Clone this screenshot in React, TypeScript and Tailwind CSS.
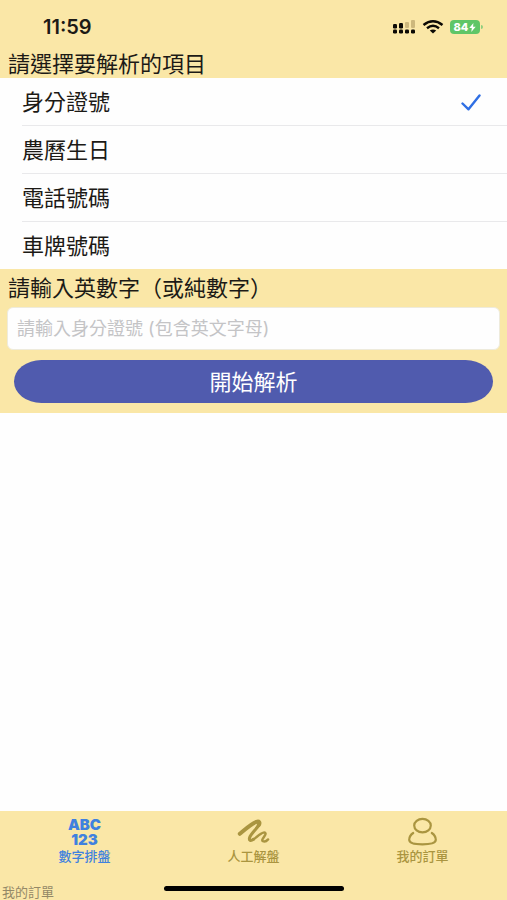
import { useState } from "react";
import type { ReactNode } from "react";

const options = [
  { label: "身分證號", hint: "請輸入身分證號 (包含英文字母)" },
  { label: "農曆生日", hint: "請輸入農曆生日" },
  { label: "電話號碼", hint: "請輸入電話號碼" },
  { label: "車牌號碼", hint: "請輸入車牌號碼" },
];

function SignalIcon() {
  return (
    <svg width="24" height="16" viewBox="0 0 24 16" aria-hidden="true">
      <g fill="#cdb87c">
        <rect x="13" y="3" width="4" height="6" rx="1" />
        <rect x="19" y="1" width="4" height="8" rx="1" />
      </g>
      <g fill="#0c0a05">
        <rect x="1" y="5" width="4" height="4.4" rx="1.2" />
        <rect x="7" y="4" width="4" height="5.4" rx="1.2" />
        <rect x="1" y="10.6" width="4" height="3.8" rx="1.2" />
        <rect x="7" y="10.6" width="4" height="3.8" rx="1.2" />
        <rect x="13" y="10.6" width="4" height="3.8" rx="1.2" />
        <rect x="19" y="10.6" width="4" height="3.8" rx="1.2" />
      </g>
    </svg>
  );
}

function WifiIcon() {
  return (
    <svg width="22" height="14" viewBox="0 0 22 14" fill="none" stroke="#0c0a05" aria-hidden="true">
      <path d="M1.5 5Q11-2.4 20.5 5" strokeWidth="2.5" />
      <path d="M5 8.2Q11 3.4 17 8.2" strokeWidth="2.4" />
      <path d="M7.8 10.6Q11 8.2 14.2 10.6L11 13.4Z" fill="#0c0a05" stroke="none" />
    </svg>
  );
}

function Battery() {
  return (
    <div className="flex items-center gap-px">
      <div className="flex h-[14px] w-[30px] items-center justify-center gap-px rounded-[4px] bg-[#5fc667] text-[11px] leading-none font-extrabold text-white">
        84
        <svg width="7" height="9" viewBox="0 0 7 9" fill="currentColor" aria-hidden="true">
          <path d="M4.4 0 .3 5.1h2.5L2.3 9l4.4-5.3H4.1Z" />
        </svg>
      </div>
      <div className="h-1 w-[2px] rounded-r-full bg-[#8fce7e]" />
    </div>
  );
}

function CheckIcon() {
  return (
    <svg width="20" height="17" viewBox="0 0 20 17" fill="none" stroke="#2f6fe4" strokeWidth="2.4" strokeLinecap="round" strokeLinejoin="round" aria-hidden="true">
      <path d="m1.5 9.5 6 5.8L18.5 1.5" />
    </svg>
  );
}

function ScribbleIcon() {
  return (
    <svg width="34" height="28" viewBox="0 0 34 28" fill="none" stroke="currentColor" strokeLinecap="round" strokeLinejoin="round" aria-hidden="true">
      <path d="M2.8 15.8C8 11.5 14.5 5.6 19.4 3.9c2.8-.9 3.9.6 2.4 3.2" strokeWidth="4" />
      <path d="M21.8 7.1c-2.2 3.8-8.2 9.1-9.2 12.5-.8 2.9 1 3.7 3.9 1.7" strokeWidth="3.1" />
      <path d="M16.5 21.3c3.4-2.3 7-6.1 10-6.7 2.4-.5 2.6 1.2 1.2 3.2-1.8 2.6-3.4 4.6-1.8 5.4 1.8.8 3.8-.2 5.2-1.8" strokeWidth="2.4" />
    </svg>
  );
}

function PersonIcon() {
  return (
    <svg width="32" height="30" viewBox="0 0 32 30" fill="none" stroke="currentColor" strokeWidth="2.2" strokeLinecap="round" aria-hidden="true">
      <ellipse cx="15.5" cy="8.6" rx="8.3" ry="6.7" />
      <path d="M6.2 16C3.4 17.9 2.2 20.6 2.2 22.8c0 3.2 5.3 4.6 13.3 4.6s13.3-1.4 13.3-4.6c0-2.2-1.2-4.9-4-6.8" />
    </svg>
  );
}

function Tab({ label, active, onSelect, children }: { label: string; active: boolean; onSelect: () => void; children: ReactNode }) {
  return (
    <button
      type="button"
      aria-current={active ? "page" : undefined}
      onClick={onSelect}
      className={`flex flex-1 flex-col items-center text-[13px] leading-4 font-medium ${active ? "text-[#4081df]" : "text-[#aa9540]"}`}
    >
      <span className="flex h-8 items-center justify-center">{children}</span>
      {label}
    </button>
  );
}

export default function App() {
  const [selected, setSelected] = useState(0);
  const [tab, setTab] = useState(0);

  return (
    <div className="flex min-h-screen flex-col bg-[#fefefe] font-[Inter,'Noto_Sans_CJK_TC',sans-serif] text-[#1c1a16]">
      <header className="bg-[#fae7a7]">
        <div className="flex h-[52px] items-center justify-between pt-[2px] pr-6 pl-[43px]">
          <time className="text-[20px] leading-6 font-semibold">11:59</time>
          <div className="flex items-center gap-[6px]">
            <SignalIcon />
            <WifiIcon />
            <Battery />
          </div>
        </div>
        <h1 id="options-title" className="px-2 pb-[2px] text-[22px] leading-6 font-normal">
          請選擇要解析的項目
        </h1>
      </header>

      <main className="flex-1">
        <div role="radiogroup" aria-labelledby="options-title" className="pl-[22px]">
          {options.map((option, index) => (
            <label
              key={option.label}
              className="flex h-12 cursor-pointer items-center justify-between border-b border-[#e9e9eb] pt-px pr-[26px] text-[22px] last:h-[47px] last:border-b-0"
            >
              {option.label}
              <input
                type="radio"
                name="item"
                checked={selected === index}
                onChange={() => setSelected(index)}
                className="ml-auto size-0 appearance-none"
              />
              {selected === index && <CheckIcon />}
            </label>
          ))}
        </div>

        <form className="flex flex-col bg-[#fae7a7] px-[7px] pt-[3px] pb-[10px]" onSubmit={(event) => event.preventDefault()}>
          <label htmlFor="code" className="px-px text-[22px] leading-8">
            請輸入英數字（或純數字）
          </label>
          <input
            id="code"
            type="text"
            placeholder={options[selected].hint}
            className="mt-[3px] h-[43px] w-full rounded-md border border-[#eeebdc] bg-[#fefefe] px-[9px] text-[18px] outline-none placeholder:text-[#c4c4c6]"
          />
          <button type="submit" className="mx-[7px] mt-[10px] h-[43px] rounded-[28px/22px] bg-[#505bae] text-[22px] leading-8 text-white">
            開始解析
          </button>
        </form>
      </main>

      <footer className="bg-[#fae7a7]">
        <nav className="flex h-[69px] items-start pt-[5px]">
          <Tab label="數字排盤" active={tab === 0} onSelect={() => setTab(0)}>
            <span className="flex flex-col text-center text-[15px] leading-[15px] font-black">
              <span>ABC</span>
              <span>123</span>
            </span>
          </Tab>
          <Tab label="人工解盤" active={tab === 1} onSelect={() => setTab(1)}>
            <ScribbleIcon />
          </Tab>
          <Tab label="我的訂單" active={tab === 2} onSelect={() => setTab(2)}>
            <PersonIcon />
          </Tab>
        </nav>
        <div className="grid h-5 grid-cols-[1fr_180px_1fr]">
          <span className="self-end pl-[2px] text-[13px] leading-4 text-[#948967]">我的訂單</span>
          <span className="mt-[6px] h-[5px] rounded-full bg-black" />
        </div>
      </footer>
    </div>
  );
}
